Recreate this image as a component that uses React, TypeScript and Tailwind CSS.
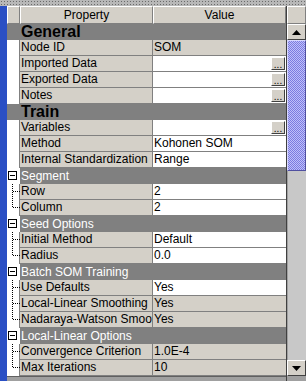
import React from 'react';

type Row =
  | { kind: 'big'; label: string }
  | { kind: 'group'; label: string }
  | {
      kind: 'prop';
      label: string;
      value: string;
      editable?: boolean;
      button?: boolean;
      tree?: 'mid' | 'last';
    };

const rows: Row[] = [
  { kind: 'big', label: 'General' },
  { kind: 'prop', label: 'Node ID', value: 'SOM' },
  { kind: 'prop', label: 'Imported Data', value: '', editable: true, button: true },
  { kind: 'prop', label: 'Exported Data', value: '', editable: true, button: true },
  { kind: 'prop', label: 'Notes', value: '', editable: true, button: true },
  { kind: 'big', label: 'Train' },
  { kind: 'prop', label: 'Variables', value: '', editable: true, button: true },
  { kind: 'prop', label: 'Method', value: 'Kohonen SOM', editable: true },
  { kind: 'prop', label: 'Internal Standardization', value: 'Range', editable: true },
  { kind: 'group', label: 'Segment' },
  { kind: 'prop', label: 'Row', value: '2', editable: true, tree: 'mid' },
  { kind: 'prop', label: 'Column', value: '2', editable: true, tree: 'last' },
  { kind: 'group', label: 'Seed Options' },
  { kind: 'prop', label: 'Initial Method', value: 'Default', editable: true, tree: 'mid' },
  { kind: 'prop', label: 'Radius', value: '0.0', editable: true, tree: 'last' },
  { kind: 'group', label: 'Batch SOM Training' },
  { kind: 'prop', label: 'Use Defaults', value: 'Yes', editable: true, tree: 'mid' },
  { kind: 'prop', label: 'Local-Linear Smoothing', value: 'Yes', tree: 'mid' },
  { kind: 'prop', label: 'Nadaraya-Watson Smoothing', value: 'Yes', tree: 'last' },
  { kind: 'group', label: 'Local-Linear Options' },
  { kind: 'prop', label: 'Convergence Criterion', value: '1.0E-4', tree: 'mid' },
  { kind: 'prop', label: 'Max Iterations', value: '10', tree: 'last' },
];

const TreeLine = ({ type }: { type: 'mid' | 'last' }) => (
  <svg width="13" height="16" className="block">
    <line
      x1="5.5"
      y1="0"
      x2="5.5"
      y2={type === 'mid' ? 16 : 8}
      stroke="#000"
      strokeDasharray="1 1"
    />
    <line x1="6" y1="7.5" x2="13" y2="7.5" stroke="#000" strokeDasharray="1 1" />
  </svg>
);

const MinusBox = () => (
  <svg width="13" height="16" className="block">
    <rect x="1.5" y="3.5" width="8" height="8" fill="#fff" stroke="#000" />
    <line x1="3" y1="7.5" x2="8" y2="7.5" stroke="#000" />
  </svg>
);

const DotsButton = () => (
  <div className="w-[14px] h-[13px] mr-[1px] bg-[#d4d0c8] border border-t-white border-l-white border-r-[#404040] border-b-[#404040] flex items-end justify-center text-[10px] leading-[9px] text-black">
    ...
  </div>
);

const Arrow = ({ up }: { up?: boolean }) => (
  <div className="h-[16px] bg-[#d4d0c8] border border-t-white border-l-white border-r-[#404040] border-b-[#404040] flex items-center justify-center">
    <svg width="9" height="5">
      <polygon points={up ? '0,5 9,5 4.5,0' : '0,0 9,0 4.5,5'} fill="#000" />
    </svg>
  </div>
);

const TableRow = ({ row }: { row: Row }) => {
  if (row.kind === 'big') {
    return (
      <div className="flex h-[16px] bg-[#808080]">
        <div className="w-[13px]" />
        <div className="flex-1 pl-[1px] text-[16px] font-bold leading-[16px] text-black">
          {row.label}
        </div>
      </div>
    );
  }
  if (row.kind === 'group') {
    return (
      <div className="flex h-[16px]">
        <div className="w-[13px] bg-white">
          <MinusBox />
        </div>
        <div className="flex-1 bg-[#808080] pl-[1px] text-[12px] leading-[16px] text-white">
          {row.label}
        </div>
      </div>
    );
  }
  return (
    <div className="flex h-[16px]">
      <div className="w-[13px] bg-white border-r border-[#808080]">
        {row.tree && <TreeLine type={row.tree} />}
      </div>
      <div className="w-[133px] bg-[#d4d0c8] border-r border-b border-[#808080] pl-[1px] text-[12px] leading-[15px] whitespace-nowrap overflow-hidden">
        {row.label}
      </div>
      <div
        className={`flex-1 flex items-center border-b border-[#808080] pl-[1px] text-[12px] leading-[15px] ${
          row.editable ? 'bg-white' : 'bg-[#d4d0c8]'
        }`}
      >
        <span className="flex-1">{row.value}</span>
        {row.button && <DotsButton />}
      </div>
    </div>
  );
};

const App = () => {
  return (
    <div className="w-[306px] h-[381px] overflow-hidden flex flex-col bg-[#a0a0a0] font-['Liberation_Sans',Arial,sans-serif] text-black">
      <div className="h-[6px] bg-[#b8b8b8] bg-[radial-gradient(#6a6a6a_0.7px,transparent_0.9px)] bg-[length:3px_3px]" />
      <div className="flex flex-1">
        <div className="w-[7px] bg-[#2a4fc4]" />
        <div className="flex-1 flex flex-col bg-[#a0a0a0] border-r border-[#404040]">
          {/* header */}
          <div className="flex h-[18px] bg-[#d4d0c8]">
            <div className="w-[13px] border border-t-white border-l-white border-r-[#808080] border-b-[#808080]" />
            <div className="w-[133px] border border-t-white border-l-white border-r-[#808080] border-b-[#808080] text-center text-[12px] leading-[16px]">
              Property
            </div>
            <div className="flex-1 border border-t-white border-l-white border-r-[#808080] border-b-[#808080] text-center text-[12px] leading-[16px]">
              Value
            </div>
          </div>
          {rows.map(r => (
            <TableRow key={r.label} row={r} />
          ))}
          <div className="h-[1px] bg-[#606060]" />
        </div>
        {/* scrollbar */}
        <div className="w-[19px] flex flex-col bg-[#c8c8c8]">
          <div className="h-[18px] bg-[#d4d0c8] border border-t-white border-l-white border-r-[#808080] border-b-[#808080]" />
          <Arrow up />
          <div className="h-[131px] bg-[repeating-conic-gradient(#7c7ce0_0%_25%,#c0c0fa_0%_50%)] bg-[length:2px_2px] border border-t-[#d8d8ff] border-l-[#d8d8ff] border-r-[#5050a0] border-b-[#5050a0]" />
          <div className="flex-1 border-l border-[#a0a0a0]" />
          <Arrow />
          <div className="h-[5px] bg-[#a0a0a0]" />
        </div>
      </div>
    </div>
  );
};

export default App;
